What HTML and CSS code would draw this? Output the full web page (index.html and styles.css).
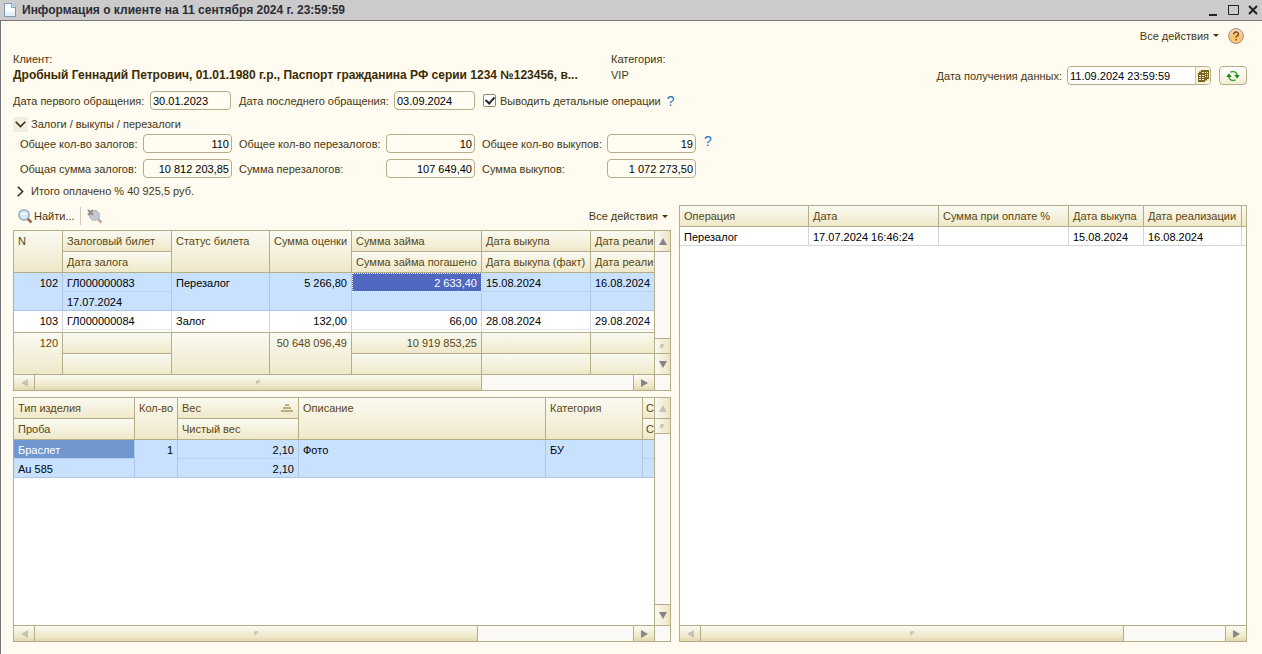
FILE: index.html
```html
<!DOCTYPE html>
<html lang="ru">
<head>
<meta charset="utf-8">
<title>Информация о клиенте</title>
<link rel="stylesheet" href="styles.css">
</head>
<body>
<header class="titlebar">
  <svg class="doc" width="12" height="14" viewBox="0 0 12 14"><path d="M.5.5h7.500l3.500 3.500v9.500H.5z" fill="#e4f0fa" stroke="#7d99b5"/><path d="M1.500 1.500h6v3h3v4h-9z" fill="#fff"/><path d="M7.500.5v4h4" fill="#c9dff2" stroke="#8aa6c0"/></svg>
  <h1>Информация о клиенте на 11 сентября 2024 г. 23:59:59</h1>
  <div class="winbtns">
    <button aria-label="Свернуть"><svg width="12" height="12"><path d="M2 10h8v2H2z" fill="#222"/></svg></button>
    <button aria-label="Развернуть"><svg width="12" height="12"><path d="M1.500 1.500h10v9h-10z" fill="none" stroke="#222"/><path d="M1 1h11v1H1z" fill="#222"/></svg></button>
    <button aria-label="Закрыть"><svg width="12" height="12"><path d="M2 2l8 8M10 2l-8 8" stroke="#222" stroke-width="2"/></svg></button>
  </div>
</header>
<main class="window">
  <div class="topbar">
    <button class="flat">Все действия <i class="caret"></i></button>
    <button class="flat" aria-label="Справка"><svg width="16" height="16" viewBox="0 0 16 16"><defs><radialGradient id="hg" cx=".5" cy=".8" r=".8"><stop offset="0" stop-color="#ffcf70"/><stop offset=".5" stop-color="#f8bd75"/><stop offset="1" stop-color="#f6e6d6"/></radialGradient></defs><circle cx="8" cy="8" r="7.400" fill="url(#hg)" stroke="#a08a78"/><path d="M5.700 6.200c0-3 4.800-3 4.800-.2C10.500 7.700 8 7.800 8 9.800" fill="none" stroke="#74420f" stroke-width="1.300"/><path d="M7.300 11h1.500v1.500H7.300z" fill="#74420f"/></svg></button>
  </div>

  <div class="client">
    <dl class="who"><dt>Клиент:</dt><dd class="strong">Дробный Геннадий Петрович, 01.01.1980 г.р., Паспорт гражданина РФ серии 1234 №123456, в...</dd></dl>
    <dl class="cat"><dt>Категория:</dt><dd>VIP</dd></dl>
    <div class="received">
      <label for="recv">Дата получения данных:</label>
      <span class="picker"><input id="recv" value="11.09.2024 23:59:59"><button aria-label="Выбрать дату"><svg width="11" height="12" viewBox="0 0 11 12"><path d="M3 0h8v9H9v1.500H7V12H0V3h1V1.500h2z" fill="#7d6320"/><path d="M1 5h2v1H1zm0 2h2v1H1zm0 2h2v1H1zm3-4h2v1H4zm0 2h2v1H4zm0 2h2v1H4zM4 2h2v1H4zm3 0h1v1H7zm2 0h1v1H9zM7 4h1v1H7zm2 0h1v1H9zM7 6h1v1H7zm2 0h1v1H9z" fill="#fff8dc"/></svg></button></span>
      <button class="refresh" aria-label="Обновить"><svg width="14" height="12" viewBox="0 0 14 12"><path d="M4.500 2.200C7 .8 11 1.500 11 5.500M9.500 9.800C7 11.200 3 10.500 3 6.500" fill="none" stroke="#3aa53a" stroke-width="1.400"/><path d="M8.300 5h5.400L11 8.500zM.3 7h5.400L3 3.500z" fill="#15801a"/></svg></button>
    </div>
  </div>

  <div class="dates">
    <label for="first" class="l1">Дата первого обращения:</label><input id="first" class="field date" value="30.01.2023" readonly>
    <label for="last" class="l2">Дата последнего обращения:</label><input id="last" class="field date" value="03.09.2024" readonly>
    <label class="check"><input type="checkbox" checked>Выводить детальные операции</label>
    <button class="flat hint">?</button>
  </div>

  <button class="group open"><span class="fold"><svg width="11" height="7" viewBox="0 0 11 7"><path d="M.7.8l4.800 4.800L10.300.8" fill="none" stroke="#3d3212" stroke-width="1.600"/></svg></span>Залоги / выкупы / перезалоги</button>

  <div class="totals">
    <label for="a1">Общее кол-во залогов:</label><input id="a1" class="field num" value="110" readonly>
    <label for="a2" class="next">Общее кол-во перезалогов:</label><input id="a2" class="field num" value="10" readonly>
    <label for="a3" class="next">Общее кол-во выкупов:</label><input id="a3" class="field num" value="19" readonly>
    <button class="flat hint">?</button>
    <label for="b1">Общая сумма залогов:</label><input id="b1" class="field num" value="10 812 203,85" readonly>
    <label for="b2" class="next">Сумма перезалогов:</label><input id="b2" class="field num" value="107 649,40" readonly>
    <label for="b3" class="next">Сумма выкупов:</label><input id="b3" class="field num" value="1 072 273,50" readonly>
  </div>

  <button class="group"><span class="fold"><svg width="7" height="11" viewBox="0 0 7 11"><path d="M.8.7l4.800 4.800L.8 10.300" fill="none" stroke="#3d3212" stroke-width="1.600"/></svg></span>Итого оплачено % 40 925,5 руб.</button>

  <div class="panes">
    <section class="left">
      <div class="toolbar">
        <button class="flat find"><svg width="15" height="15" viewBox="0 0 15 15"><path d="M9.500 9.500l4 4" stroke="#a56a4c" stroke-width="2.600"/><circle cx="6" cy="6" r="5.200" fill="#d5e9fa" stroke="#8797ad" stroke-width="1.200"/><path d="M3 6c1-3 5-3 6 0" fill="#fff"/></svg>Найти...</button>
        <span class="sep"></span>
        <button class="flat" aria-label="Отменить поиск"><svg width="16" height="15" viewBox="0 0 16 15"><path d="M10.500 9.500l4 4" stroke="#c0a9a2" stroke-width="2.600"/><circle cx="7.500" cy="6.500" r="5" fill="#c4c9cf" stroke="#adb3bc"/><path d="M1 1l5 5M6 1L1 6" stroke="#9b8a8a" stroke-width="2"/></svg></button>
        <button class="flat actions">Все действия <i class="caret"></i></button>
      </div>

      <div class="grid first">
        <div class="view">
          <table class="t1">
            <colgroup><col class="w49"><col class="w109"><col class="w98"><col class="w82"><col class="w130"><col class="w109"><col class="w64"></colgroup>
            <thead>
              <tr><th rowspan="2">N</th><th>Залоговый билет</th><th rowspan="2">Статус билета</th><th rowspan="2">Сумма оценки</th><th>Сумма займа</th><th>Дата выкупа</th><th>Дата реали</th></tr>
              <tr><th>Дата залога</th><th>Сумма займа погашено</th><th>Дата выкупа (факт)</th><th>Дата реали</th></tr>
            </thead>
            <tbody>
              <tr class="sel"><td class="r" rowspan="2">102</td><td class="sub">ГЛ000000083</td><td rowspan="2">Перезалог</td><td class="r" rowspan="2">5 266,80</td><td class="r sub current">2 633,40</td><td class="sub">15.08.2024</td><td class="sub">16.08.2024</td></tr>
              <tr class="sel"><td>17.07.2024</td><td></td><td></td><td></td></tr>
              <tr><td class="r" rowspan="2">103</td><td class="sub">ГЛ000000084</td><td rowspan="2">Залог</td><td class="r" rowspan="2">132,00</td><td class="r sub">66,00</td><td class="sub">28.08.2024</td><td class="sub">29.08.2024</td></tr>
              <tr class="cut"><td></td><td></td><td></td><td></td></tr>
            </tbody>
            <tfoot>
              <tr><td class="r low" rowspan="2">120</td><td></td><td class="low" rowspan="2"></td><td class="r low" rowspan="2">50 648 096,49</td><td class="r">10 919 853,25</td><td></td><td></td></tr>
              <tr><td class="low"></td><td class="low"></td><td class="low"></td><td class="low"></td></tr>
            </tfoot>
          </table>
        </div>
        <div class="vbar"><button class="up" aria-label="Вверх"><i></i></button><span class="track"></span><span class="thumb end"><b></b></span><button class="down" aria-label="Вниз"><i></i></button></div>
        <div class="hbar"><button class="lt off" aria-label="Влево"><i></i></button><span class="thumb h1"><b></b></span><span class="track h2"></span><button class="rt" aria-label="Вправо"><i></i></button></div>
        <span class="corner"></span>
      </div>

      <div class="grid second">
        <div class="view">
          <table class="t2">
            <colgroup><col class="w121"><col class="w43"><col class="w121"><col class="w247"><col class="w97"><col class="w12"></colgroup>
            <thead>
              <tr><th>Тип изделия</th><th rowspan="2">Кол-во</th><th><span class="sorted">Вес<svg width="12" height="8"><path d="M4 0h4v2H4zM2 3h8v2H2zM0 6h12v2H0z" fill="#b9ad7c"/></svg></span></th><th rowspan="2">Описание</th><th rowspan="2">Категория</th><th class="slim">С</th></tr>
              <tr><th>Проба</th><th>Чистый вес</th><th class="slim">С</th></tr>
            </thead>
            <tbody>
              <tr class="sel"><td class="sub picked">Браслет</td><td class="r" rowspan="2">1</td><td class="r sub">2,10</td><td rowspan="2">Фото</td><td rowspan="2">БУ</td><td class="sub slim"></td></tr>
              <tr class="sel"><td>Au 585</td><td class="r">2,10</td><td class="slim"></td></tr>
            </tbody>
          </table>
        </div>
        <div class="vbar"><button class="up off" aria-label="Вверх"><i></i></button><span class="thumb"><b></b></span><span class="track"></span><button class="down" aria-label="Вниз"><i></i></button></div>
        <div class="hbar"><button class="lt off" aria-label="Влево"><i></i></button><span class="thumb h1"><b></b></span><span class="track h2"></span><button class="rt" aria-label="Вправо"><i></i></button></div>
        <span class="corner"></span>
      </div>
    </section>

    <section class="grid ops">
      <div class="view">
        <table class="t3">
          <colgroup><col class="w129"><col class="w130"><col class="w130"><col class="w75"><col class="w98"><col class="w98"></colgroup>
          <thead><tr><th>Операция</th><th>Дата</th><th>Сумма при оплате %</th><th>Дата выкупа</th><th>Дата реализации</th><th></th></tr></thead>
          <tbody><tr><td>Перезалог</td><td>17.07.2024 16:46:24</td><td></td><td>15.08.2024</td><td>16.08.2024</td><td></td></tr></tbody>
        </table>
      </div>
      <div class="hbar"><button class="lt off" aria-label="Влево"><i></i></button><span class="thumb h1"><b></b></span><span class="track h2"></span><button class="rt" aria-label="Вправо"><i></i></button></div>
    </section>
  </div>
</main>
</body>
</html>
```
FILE: styles.css
```css
* { box-sizing: border-box; }
:root {
  --line: #b5ad88;
  --head: linear-gradient(#fafaf2, #efe8c9);
  --ink: #453710;
}
body {
  margin: 0;
  height: 100vh;
  display: flex;
  flex-direction: column;
  background: #fffbf0;
  color: var(--ink);
  font: 11px/16px "Liberation Sans", Arial, sans-serif;
}
button, input { font: inherit; color: inherit; margin: 0; }
button { padding: 0; border: 0; background: none; }
svg { display: block; flex: none; }

.titlebar {
  display: flex;
  align-items: center;
  height: 21px;
  padding: 0 3px 0 4px;
  background: #cbcbcb;
  border-bottom: 1px solid #77777a;
}
.titlebar h1 { flex: 1; margin: 0 0 0 6px; font-size: 12px; font-weight: bold; color: #2d2d36; }
.winbtns { display: flex; gap: 8px; }

.window {
  flex: 1;
  min-height: 0;
  display: flex;
  flex-direction: column;
  padding: 6px 15px 12px 12px;
  border-left: 1px solid #77777a;
}
.flat { display: flex; align-items: center; white-space: nowrap; }
.caret { margin-left: 4px; border: 3px solid transparent; border-top-color: var(--ink); border-bottom: 0; }
.topbar { display: flex; justify-content: flex-end; gap: 9px; height: 17px; padding-right: 3px; }

.client { display: flex; align-items: flex-start; margin-top: 7px; height: 33px; }
.client dl, .client dd { margin: 0; }
.who { width: 598px; }
.strong { white-space: nowrap; font-size: 12px; font-weight: bold; color: #3b2c05; }
.cat { flex: 1; }
.received { display: flex; align-items: center; margin-top: 15px; }
.picker { display: flex; width: 144px; height: 19px; margin: 0 8px 0 5px; border: 1px solid var(--line); border-radius: 4px; background: #fff; overflow: hidden; }
.picker input { flex: 1; min-width: 0; padding: 0 2px; border: 0; background: none; color: #000; }
.picker button { display: flex; align-items: center; justify-content: center; width: 15px; border-left: 1px solid #d3cba8; background: #f8f4de; }
.refresh { display: flex; align-items: center; justify-content: center; width: 28px; height: 19px; border: 1px solid var(--line); border-radius: 4px; background: linear-gradient(#fff, #f3efd5); }

.dates { display: flex; align-items: center; height: 19px; margin-top: 7px; }
.l1 { width: 137px; }
.l2 { width: 155px; }
.dates .date { width: 81px; margin-right: 8px; }
.field { height: 19px; min-width: 0; padding: 0 2px; border: 1px solid var(--line); border-radius: 4px; background: #fffcf2; color: #000; }
.num { text-align: right; }
.check { display: flex; align-items: center; gap: 4px; }
.check input { appearance: none; display: flex; align-items: center; justify-content: center; width: 13px; height: 13px; border: 1px solid #8e8768; border-radius: 2px; background: #fff; }
.check input:checked::before { content: ""; width: 4px; height: 7px; margin-bottom: 2px; border: solid #2a2a2a; border-width: 0 2px 2px 0; transform: rotate(42deg); }
.hint { color: #1874b8; font-size: 14px; margin-left: 8px; }
.dates .hint { margin-left: 6px; }
.totals .hint { align-self: start; height: 14px; }

.group { display: flex; align-items: center; gap: 3px; height: 16px; }
.group.open { margin-top: 6px; }
.fold { display: flex; align-items: center; justify-content: center; width: 15px; height: 15px; }
.open .fold { background: #f3eedf; }

.totals { display: grid; grid-template-columns: 123px 89px 154px 89px 132px 89px 1fr; row-gap: 6px; align-items: center; margin: 2px 0 5px; padding-left: 7px; }
.next { padding-left: 7px; white-space: nowrap; }

.panes { flex: 1; min-height: 0; display: grid; grid-template-columns: 658fr 568fr; gap: 8px; margin-top: 6px; }
.left { display: flex; flex-direction: column; min-width: 0; }
.toolbar { display: flex; align-items: center; height: 25px; padding: 0 3px 3px 5px; }
.find { gap: 1px; }
.sep { width: 1px; height: 18px; margin: 0 6px 0 5px; background: #d4cdb5; }
.actions { margin-left: auto; }

.grid { display: grid; grid-template: minmax(0, 1fr) 16px / minmax(0, 1fr) 16px; border: 1px solid var(--line); background: #fff; min-width: 0; }
.second { flex: 1; min-height: 0; margin-top: 6px; }
.ops { grid-template-columns: minmax(0, 1fr); }
.view { overflow: hidden; }
table { table-layout: fixed; border-collapse: separate; border-spacing: 0; line-height: 16px; }
.t1, .t2 { width: 641px; }
.t3 { width: 660px; }
th, td { border: solid var(--line); border-width: 0 1px 1px 0; text-align: left; vertical-align: top; white-space: nowrap; overflow: hidden; font-weight: normal; }
th, tfoot td { height: 21px; padding: 2px 4px; background: var(--head); color: #594712; }
tbody td { height: 19px; padding: 2px 4px 0; border-color: #d3d6dc; color: #000; }
.r { text-align: right; }
.sub { border-bottom-color: #e6e6ea; }
.sel td { background: #c8e1ff; border-color: #aec7e6; }
.sel .sub { border-bottom-color: #b7d2f0; }
.sel .current { background: #5068c0; color: #fff; outline: 1px dotted #fff; outline-offset: -1px; }
.sel .picked { background: #7097cf; color: #fff; }
.cut td { height: 3px; padding: 0; }
.t1 tbody tr:nth-child(n+3) td:not(.sub) { border-bottom-color: var(--line); }
tfoot .low { height: 20px; border-bottom: 0; }
tr > .slim { padding-left: 3px; padding-right: 0; }
.t1 tr > :last-child, .t2 .slim { border-right: 0; }
.t1 tr.cut td, .t1 tfoot .low { border-right: 1px solid var(--line); }
.t1 tr.cut td { border-right-color: #d3d6dc; }
.t1 tr.cut td:last-child, .t1 tfoot tr + tr .low:last-child { border-right: 0; }
.sorted { display: flex; align-items: center; justify-content: space-between; padding-right: 1px; }
.w12 { width: 12px; } .w43 { width: 43px; } .w49 { width: 49px; } .w64 { width: 64px; }
.w75 { width: 75px; } .w82 { width: 82px; } .w97 { width: 97px; } .w98 { width: 98px; }
.w109 { width: 109px; } .w121 { width: 121px; } .w129 { width: 129px; } .w130 { width: 130px; }
.w247 { width: 247px; }

.vbar { display: flex; flex-direction: column; border-left: 1px solid var(--line); background: #faf9f5; }
.vbar button, .vbar .thumb { display: flex; align-items: center; justify-content: center; height: 21px; border-bottom: 1px solid var(--line); background: linear-gradient(90deg, #fafaf2, #ebe4c2); }
.vbar .thumb { height: 15px; }
.vbar .end { border-top: 1px solid var(--line); height: 16px; }
.track { flex: 1; background: #faf9f5; }
.vbar .down { height: 20px; }
.second .vbar .down { height: 21px; border-top: 1px solid var(--line); }
.first .down, .second .down { border-bottom: 0 !important; }
.hbar { display: flex; border-top: 1px solid var(--line); }
.hbar button, .hbar .thumb { display: flex; align-items: center; justify-content: center; width: 21px; border-right: 1px solid var(--line); background: linear-gradient(#fafaf2, #efe8c9 70%, #e0d8b0); }
.hbar .rt { border-left: 1px solid var(--line); border-right: 0; }
.hbar .h1 { flex: 447; }
.hbar .h2 { flex: 151; }
.second .h1 { flex: 443; }
.second .h2 { flex: 155; }
.ops .h1 { flex: 423; }
.ops .h2 { flex: 101; }
.thumb b { width: 5px; height: 5px; border-radius: 3px; background: linear-gradient(135deg, #b0a67c, #fff); }
.corner { border: solid var(--line); border-width: 1px 0 0 1px; background: #faf9f5; }
.up i, .down i, .lt i, .rt i { border: 4px solid transparent; }
.up i { border-bottom: 7px solid #858588; border-top: 0; }
.down i { border-top: 7px solid #858588; border-bottom: 0; }
.lt i { border-right: 7px solid #858588; border-left: 0; }
.rt i { border-left: 7px solid #858588; border-right: 0; }
.up.off i { border-bottom-color: #c6c3b6; }
.lt.off i { border-right-color: #c6c3b6; }
```
